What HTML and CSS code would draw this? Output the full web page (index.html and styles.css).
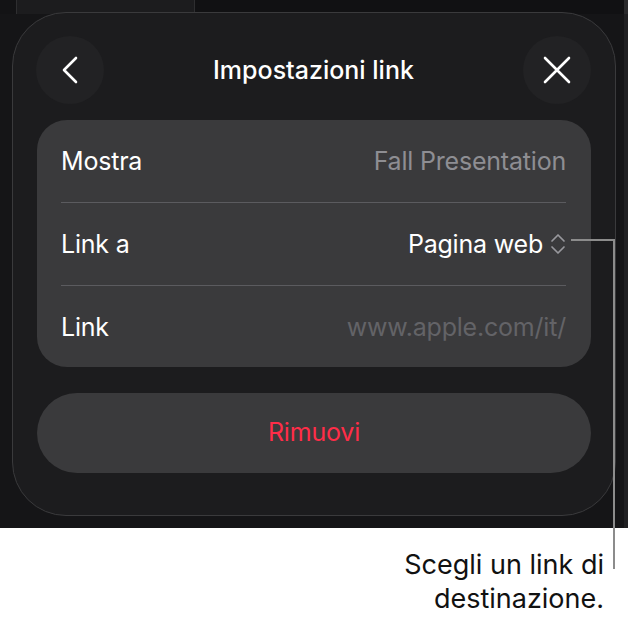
FILE: index.html
```html
<!DOCTYPE html>
<html lang="it">
<head>
    <meta charset="UTF-8">
    <meta name="viewport" content="width=device-width, initial-scale=1.0"/>
    <title>Impostazioni link</title>
    <link rel="stylesheet" href="styles.css">
</head>
<body>
<div class="screen">
    <div class="sheet">
        <div class="header">
            <button class="round-btn" aria-label="Indietro">
                <svg width="18" height="28" viewBox="0 0 18 28">
                    <path d="M15 2 L3 14 L15 26" fill="none" stroke="#fff" stroke-width="2.6" stroke-linecap="round" stroke-linejoin="round"/>
                </svg>
            </button>
            <div class="title">Impostazioni link</div>
            <button class="round-btn" aria-label="Chiudi">
                <svg width="30" height="30" viewBox="0 0 30 30">
                    <path d="M3 3 L27 27 M27 3 L3 27" fill="none" stroke="#fff" stroke-width="2.6" stroke-linecap="round"/>
                </svg>
            </button>
        </div>

        <div class="card">
            <div class="row">
                <span class="label">Mostra</span>
                <span class="value">Fall Presentation</span>
            </div>
            <div class="row">
                <span class="label">Link a</span>
                <span class="value picker">Pagina web
                    <svg width="16" height="22" viewBox="0 0 16 22">
                        <path d="M2 8 L8 2 L14 8 M2 14 L8 20 L14 14" fill="none" stroke="#98989d" stroke-width="1.7" stroke-linecap="round" stroke-linejoin="round"/>
                    </svg>
                </span>
            </div>
            <div class="row">
                <span class="label">Link</span>
                <span class="value placeholder">www.apple.com/it/</span>
            </div>
        </div>

        <button class="remove-btn">Rimuovi</button>
    </div>
    <div class="callout-line"></div>
</div>

<div class="caption">
    <p>Scegli un link di<br>destinazione.</p>
</div>
</body>
</html>
```

FILE: styles.css
```css
* {
    box-sizing: border-box;
}
html, body {
    margin: 0;
    padding: 0;
    background-color: #ffffff;
    font-family: Inter, 'Noto Sans', sans-serif;
}
.screen {
    position: relative;
    height: 528px;
    padding: 12px 0 0 12px;
    background:
        linear-gradient(to right,
            #131315 16px, #2e2e30 16px 17px, #1c1c1e 17px 194px,
            #2e2e30 194px 195px, #111113 195px 624px, #2a2a2c 624px)
        top left / 100% 14px no-repeat,
        linear-gradient(to right, #151517 624px, #202022 624px);
}
.sheet {
    width: 604px;
    height: 504px;
    padding: 23px 24px 0 24px;
    background-color: #1c1c1e;
    border: 1px solid #3a3a3c;
    border-radius: 54px;
}
.header {
    display: flex;
    align-items: center;
    justify-content: space-between;
    height: 68px;
    margin: 0 0 16px -1px;
}
.round-btn {
    display: flex;
    align-items: center;
    justify-content: center;
    width: 68px;
    height: 68px;
    padding: 0;
    border: none;
    border-radius: 50%;
    background-color: #222224;
}
.title {
    color: #ffffff;
    font-size: 25px;
    font-weight: 500;
}
.card {
    background-color: #3a3a3c;
    border-radius: 30px;
    padding: 0 25px 0 24px;
}
.row {
    display: flex;
    align-items: center;
    justify-content: space-between;
    height: 82px;
    font-size: 25px;
    letter-spacing: -0.2px;
}
.row + .row {
    height: 83px;
    border-top: 1px solid #5b5b5f;
}
.row:last-child {
    height: 82px;
}
.label {
    color: #ffffff;
}
.value {
    color: #8e8e93;
}
.picker {
    display: flex;
    align-items: center;
    gap: 7px;
    color: #ffffff;
}
.placeholder {
    color: #636367;
}
.remove-btn {
    display: block;
    width: 100%;
    height: 80px;
    margin-top: 26px;
    padding-bottom: 3px;
    border: none;
    border-radius: 40px;
    background-color: #3a3a3c;
    color: #ff2d48;
    font-family: inherit;
    font-size: 25px;
    letter-spacing: -0.2px;
}
.callout-line {
    position: absolute;
    left: 571px;
    top: 239px;
    width: 44px;
    height: 330px;
    border-top: 2px solid #8c8c8c;
    border-right: 2px solid #8c8c8c;
}
.caption {
    padding: 0 24px 0 0;
    text-align: right;
}
.caption p {
    margin: 20px 0 0;
    color: #111111;
    font-size: 27px;
    line-height: 34px;
}
```
